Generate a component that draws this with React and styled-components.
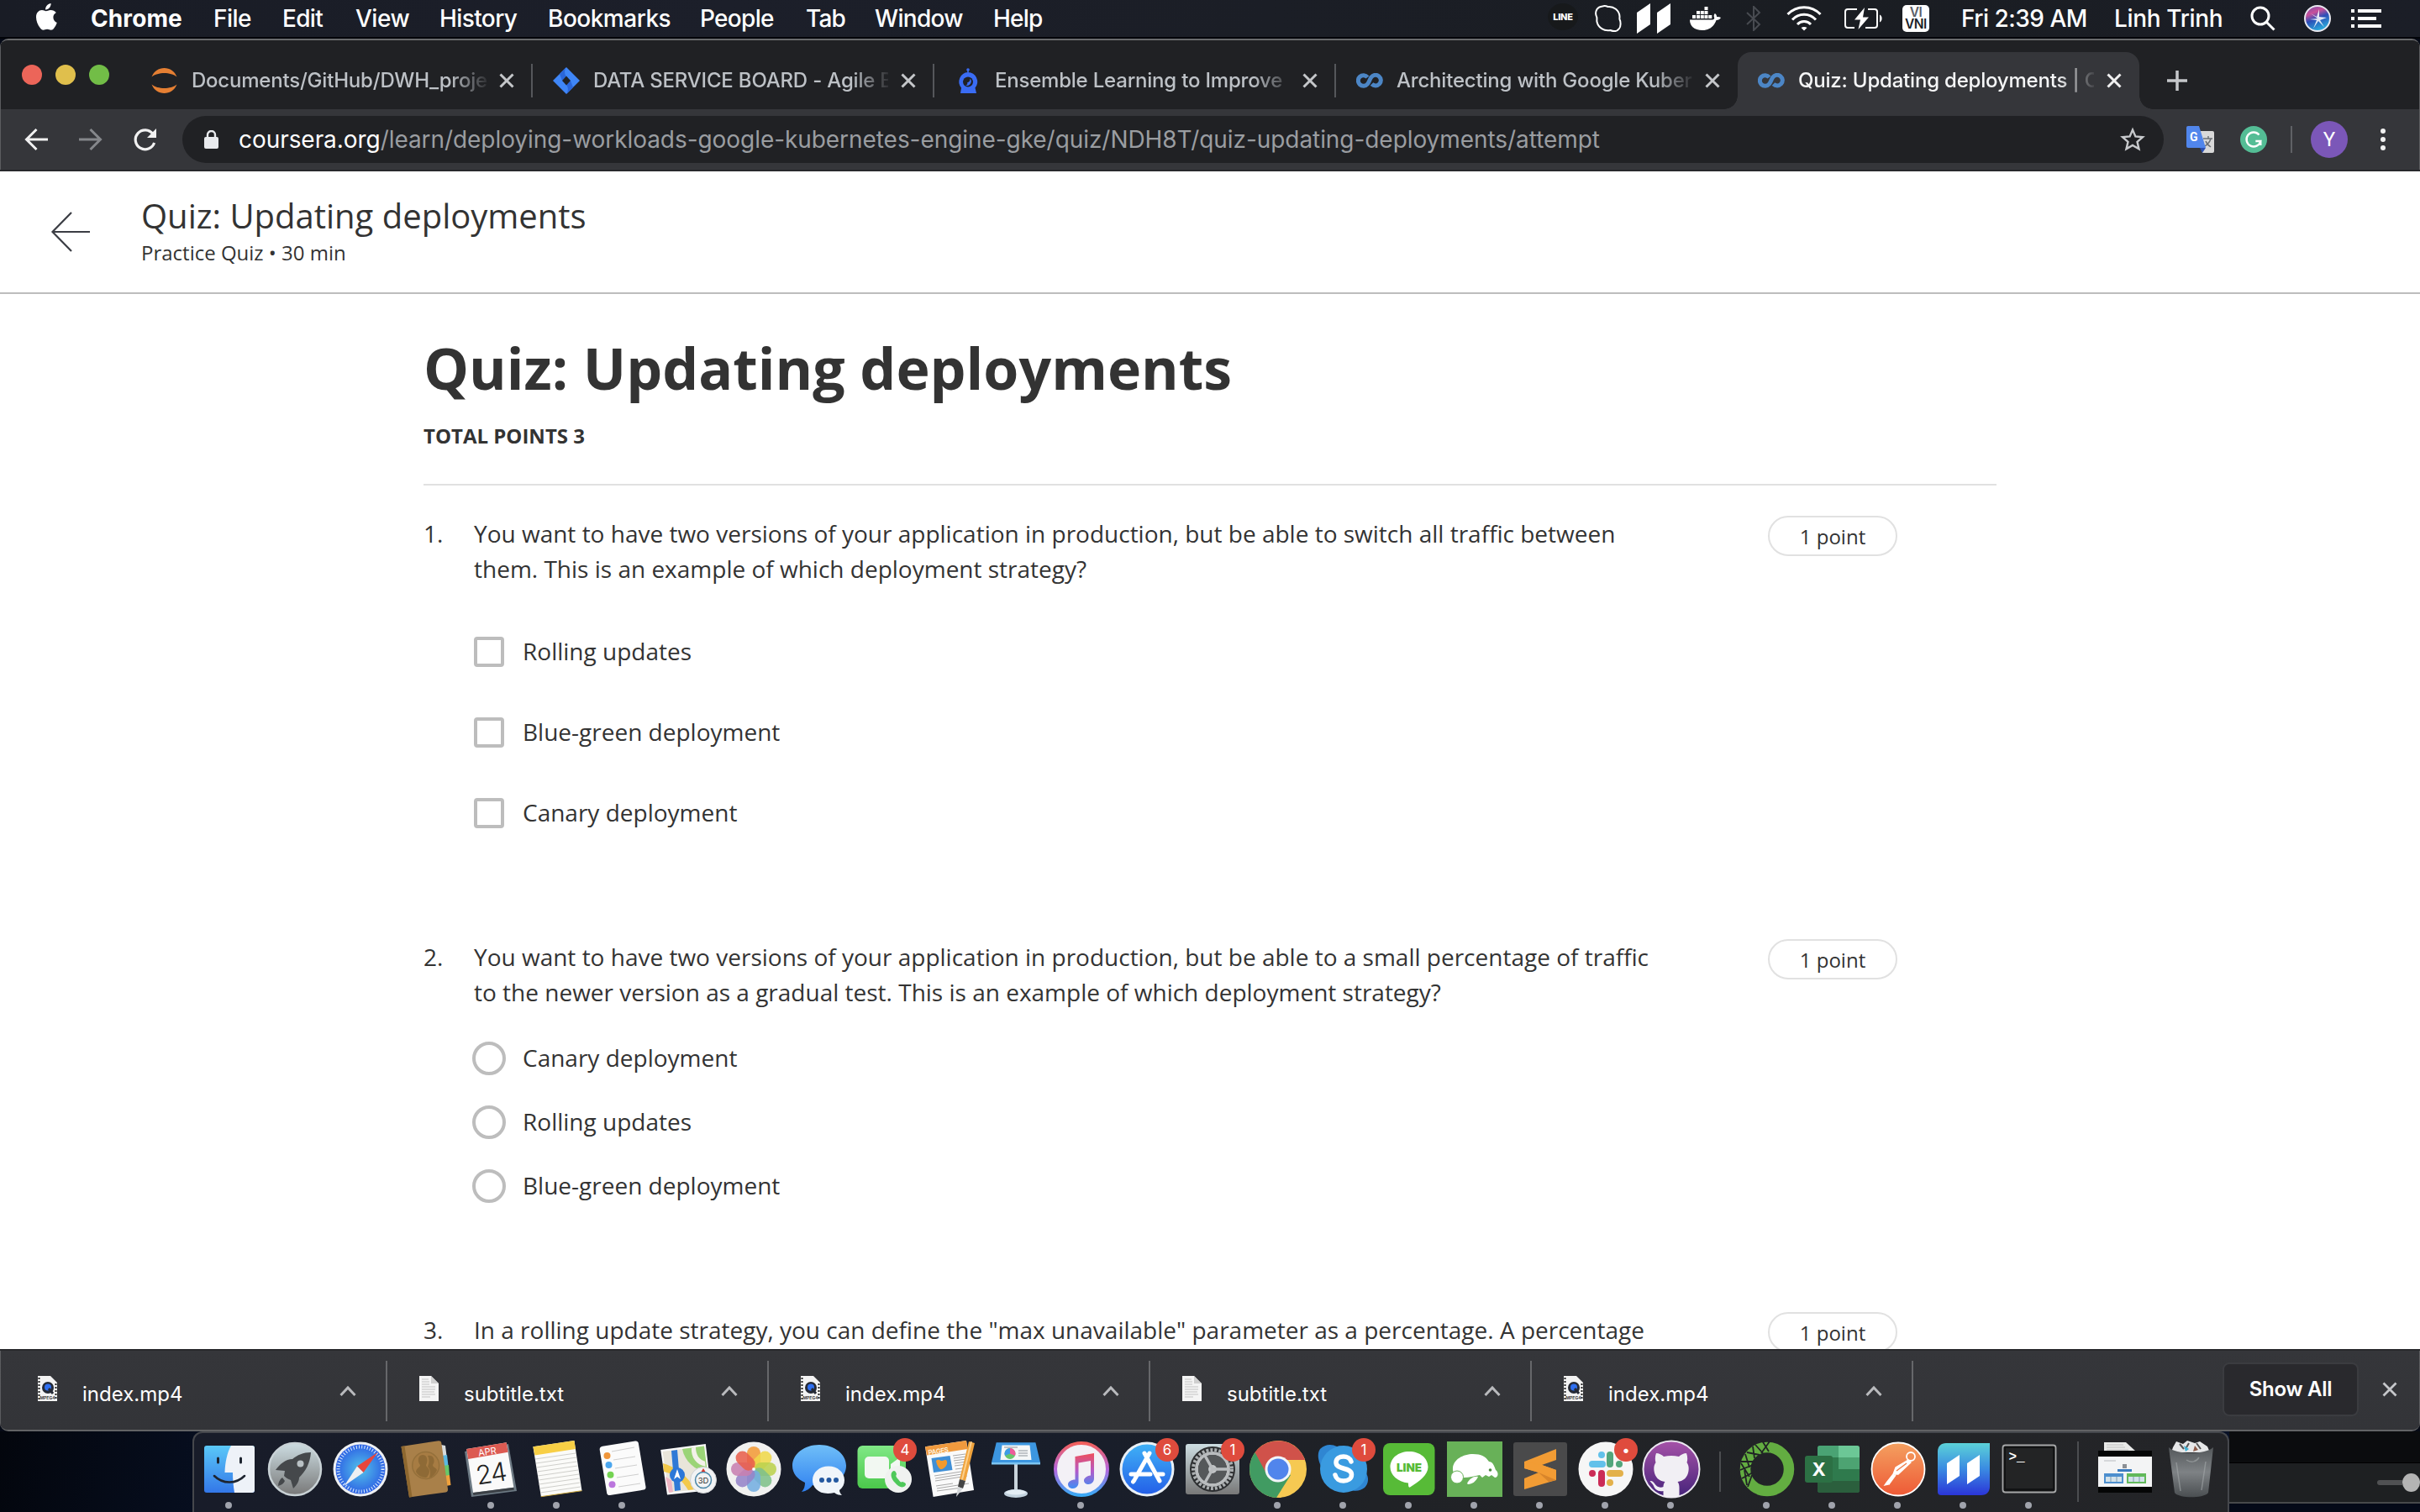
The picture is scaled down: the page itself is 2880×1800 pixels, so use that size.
import React from "react";
import styled, { createGlobalStyle, css } from "styled-components";

const ui = `Inter, "Liberation Sans", sans-serif`;
const body = `"Open Sans", "Noto Sans", sans-serif`;

const Global = createGlobalStyle`
  * { box-sizing: border-box; }
  html, body { margin: 0; padding: 0; background: #060a16; }
  svg { display: block; flex: none; }
`;

const Desktop = styled.div`
  width: 2880px;
  height: 1800px;
  overflow: hidden;
  display: flex;
  flex-direction: column;
  background: #060a16;
  font-family: ${ui};
`;

/* ---------- macOS menu bar ---------- */
const MenuBar = styled.header`
  height: 46px;
  flex: none;
  display: flex;
  justify-content: space-between;
  background: linear-gradient(90deg, #191c25, #1c1f2a 30%, #1a1d22 75%, #1b1e27);
  border-bottom: 2px solid #020409;
  color: #fff;
`;
const MenuLeft = styled.nav`
  display: flex;
  align-items: center;
  padding-left: 42px;
`;
const AppleSlot = styled.span`
  width: 66px;
  margin-top: -4px;
`;
const MenuItem = styled.span`
  width: ${(p) => p.$w}px;
  font-size: 28px;
  line-height: 44px;
  white-space: nowrap;
  letter-spacing: ${(p) => p.$ls ?? -0.5}px;
  font-weight: ${(p) => (p.$bold ? 700 : 500)};
`;
const MenuRight = styled.div`
  display: flex;
  align-items: center;
  width: 1040px;
`;
const Status = styled.span`
  width: ${(p) => p.$w}px;
  height: 44px;
  display: flex;
  align-items: center;
  flex: none;
`;
const LineBlob = styled.span`
  width: 36px;
  height: 32px;
  margin: -4px 0 0 2px;
  border-radius: 50%;
  background: #17191b;
  display: flex;
  align-items: center;
  justify-content: center;
  font-size: 11px;
  font-weight: 800;
  letter-spacing: -0.3px;
`;
const InputBadge = styled.span`
  width: 32px;
  height: 32px;
  border-radius: 5px;
  background: #fff;
  color: #1b1e27;
  font-size: 15.5px;
  font-weight: 600;
  line-height: 14.5px;
  text-align: center;
  display: flex;
  flex-direction: column;
  justify-content: center;
  letter-spacing: -0.5px;
`;
const InputTop = styled.span`
  color: #5c5f68;
`;

/* ---------- Chrome window ---------- */
const Window = styled.main`
  height: 1658px;
  flex: none;
  display: flex;
  flex-direction: column;
  border-radius: 10px;
  overflow: hidden;
  background: #202124;
  border-top: 2px solid #696a6c;
  border-bottom: 2px solid #626365;
`;
const edge = css`
  box-shadow: inset 1px 0 #5b5c5f, inset -1px 0 #5b5c5f;
`;
const TabStrip = styled.div`
  height: 82px;
  flex: none;
  display: flex;
  align-items: flex-end;
  background: #202124;
  ${edge}
`;
const Lights = styled.div`
  width: 156px;
  height: 82px;
  display: flex;
  gap: 16px;
  padding: 29px 0 0 26px;
`;
const Light = styled.span`
  width: 24px;
  height: 24px;
  border-radius: 50%;
  background: ${(p) => p.$c};
`;
const Tab = styled.div`
  width: 478px;
  height: 68px;
  display: flex;
  align-items: center;
  padding-left: 24px;
  position: relative;
  color: ${(p) => (p.$active ? "#f5f6f7" : "#bdc1c6")};
  ${(p) =>
    p.$active &&
    css`
      background: #35363a;
      border-radius: 16px 16px 0 0;
      &::before,
      &::after {
        content: "";
        position: absolute;
        bottom: 0;
        width: 16px;
        height: 16px;
      }
      &::before {
        left: -16px;
        background: radial-gradient(circle at 0 0, transparent 15.5px, #35363a 16px);
      }
      &::after {
        right: -16px;
        background: radial-gradient(circle at 100% 0, transparent 15.5px, #35363a 16px);
      }
    `}
`;
const Favicon = styled.span`
  width: 48px;
`;
const TabTitle = styled.span`
  width: 352px;
  font-size: 24px;
  line-height: 68px;
  letter-spacing: -0.2px;
  font-weight: 500;
  white-space: nowrap;
  overflow: hidden;
  mask-image: linear-gradient(90deg, #000 308px, transparent 356px);
`;
const CloseSlot = styled.span`
  width: 48px;
  display: flex;
  justify-content: center;
`;
const TabRule = styled.span`
  width: 2px;
  height: 40px;
  margin-left: 5px;
  background: #55575b;
`;
const PlusSlot = styled.span`
  height: 68px;
  padding-left: 33px;
  display: flex;
  align-items: center;
`;
const Toolbar = styled.div`
  height: 74px;
  flex: none;
  display: flex;
  align-items: center;
  background: #35363a;
  border-bottom: 2px solid #28292c;
  ${edge}
`;
const NavButtons = styled.div`
  width: 217px;
  padding-left: 28px;
  display: flex;
  gap: 35px;
`;
const Omnibox = styled.div`
  width: 2358px;
  height: 56px;
  border-radius: 28px;
  background: #202124;
  display: flex;
  align-items: center;
  padding: 0 22px 0 26px;
`;
const Url = styled.span`
  flex: 1;
  margin-left: 24px;
  font-size: 28px;
  line-height: 56px;
  letter-spacing: -0.06px;
  color: #9a9da1;
  white-space: nowrap;
`;
const Host = styled.span`
  color: #fff;
`;
const Extensions = styled.div`
  display: flex;
  align-items: center;
  padding-left: 27px;
`;
const ExtRule = styled.span`
  width: 2px;
  height: 32px;
  margin: 0 22px 0 28px;
  background: #5f6165;
`;
const Avatar = styled.span`
  width: 44px;
  height: 44px;
  border-radius: 50%;
  background: #7b57b8;
  color: #fff;
  font: 400 24px/44px Roboto, sans-serif;
  text-align: center;
  margin-right: 38px;
`;
const Grammarly = styled.span`
  margin-left: 31px;
`;

/* ---------- Page ---------- */
const Page = styled.section`
  height: 1402px;
  flex: none;
  overflow: hidden;
  background: #fff;
  color: #333;
  font-family: ${body};
`;
const PageHeader = styled.div`
  height: 146px;
  border-bottom: 2px solid #bdbdbd;
  display: flex;
`;
const BackSlot = styled.div`
  width: 168px;
  padding: 48px 0 0 60px;
`;
const HeaderText = styled.div`
  padding-top: 26px;
`;
const HeaderTitle = styled.div`
  font-size: 40px;
  line-height: 54px;
`;
const HeaderSub = styled.div`
  margin-top: -1px;
  font-size: 24px;
  line-height: 36px;
`;
const Content = styled.div`
  width: 1872px;
  margin-left: 504px;
  padding-top: 38px;
`;
const H1 = styled.h1`
  margin: 0;
  font-size: 68px;
  line-height: 100px;
  font-weight: 700;
  white-space: nowrap;
`;
const Total = styled.div`
  margin-top: 13px;
  padding-bottom: 39px;
  font-size: 24px;
  line-height: 36px;
  font-weight: 700;
  border-bottom: 2px solid #e1e1e1;
  margin-bottom: 36px;
`;
const Question = styled.article`
  display: flex;
  align-items: flex-start;
  height: ${(p) => p.$h}px;
  font-size: 28px;
  line-height: 42px;
`;
const Num = styled.span`
  width: 60px;
`;
const QBody = styled.div`
  width: 1540px;
`;
const Prompt = styled.p`
  margin: 0;
  height: 84px;
  white-space: nowrap;
`;
const Options = styled.div`
  margin-top: ${(p) => (p.$round ? 20 : 30)}px;
`;
const Option = styled.label`
  height: ${(p) => (p.$round ? 76 : 96)}px;
  display: flex;
  align-items: center;
`;
const OptionText = styled.span`
  padding-bottom: 2px;
`;
const BoxSlot = styled.span`
  width: 58px;
`;
const Box = styled.span`
  display: block;
  width: ${(p) => (p.$round ? 40 : 36)}px;
  height: ${(p) => (p.$round ? 40 : 36)}px;
  margin-left: ${(p) => (p.$round ? -2 : 0)}px;
  border: 4px solid #bdbdbd;
  border-radius: ${(p) => (p.$round ? "50%" : "4px")};
`;
const Points = styled.span`
  width: 154px;
  height: 48px;
  border: 2px solid #e1e1e1;
  border-radius: 24px;
  font-size: 24px;
  line-height: 45px;
  text-align: center;
`;

/* ---------- Download shelf ---------- */
const Shelf = styled.footer`
  flex: 1;
  display: flex;
  background: linear-gradient(#35363a, #333438);
  border-top: 2px solid #28292c;
  color: #fff;
  ${edge}
`;
const Download = styled.div`
  width: ${(p) => p.$w}px;
  padding-left: ${(p) => p.$pad}px;
  display: flex;
`;
const FileIcon = styled.span`
  width: 53px;
  padding-top: 30px;
`;
const FileName = styled.span`
  flex: 1;
  font-size: 24px;
  line-height: 36px;
  padding-top: 34px;
`;
const Chevron = styled.span`
  padding: 41px 35px 0 0;
`;
const ShelfRule = styled.span`
  width: 2px;
  height: 72px;
  margin-top: 12px;
  background: #66676a;
`;
const ShelfEnd = styled.div`
  margin-left: auto;
  display: flex;
  padding: 14px 27px 0 0;
  gap: 28px;
`;
const ShowAll = styled.button`
  width: 162px;
  height: 64px;
  border: 2px solid #3b3c40;
  border-radius: 8px;
  background: #29292d;
  color: #fff;
  font: 600 24px/58px ${ui};
  letter-spacing: -0.3px;
  padding: 0;
`;
const ShelfClose = styled.span`
  padding-top: 23px;
`;

/* ---------- Dock ---------- */
const DockArea = styled.div`
  height: 96px;
  flex: none;
  display: flex;
  background: linear-gradient(100deg, #03060d, #081126 12%);
`;
const Dock = styled.div`
  width: 2424px;
  margin-left: 229px;
  border: 2px solid #45474c;
  border-bottom: 0;
  border-radius: 12px 12px 0 0;
  background: linear-gradient(90deg, #181c29, #191e2a 45%, #202226 58%, #242528);
  display: flex;
  padding-left: 2px;
`;
const Cell = styled.div`
  width: 78px;
  height: 94px;
  position: relative;
`;
const RunDot = styled.i`
  position: absolute;
  left: 35px;
  top: 82px;
  width: 8px;
  height: 8px;
  border-radius: 50%;
  background: #a0a3ac;
`;
const Badge = styled.b`
  position: absolute;
  left: 50px;
  top: 6px;
  width: 28px;
  height: 28px;
  border-radius: 50%;
  background: #df4b3d;
  color: #fff;
  font: 400 17px/28px ${ui};
  text-align: center;
`;
const DockRule = styled.span`
  width: 2px;
  height: ${(p) => p.$h}px;
  margin: ${(p) => p.$m};
  background: #4b4d50;
`;
const Behind = styled.div`
  flex: 1;
  display: flex;
  flex-direction: column;
  background: #050a18;
`;
const BehindTop = styled.div`
  height: 38px;
  background: #0b0c0e;
  border-bottom: 1px solid #000;
`;
const BehindBar = styled.div`
  height: 48px;
  background: #1e2022;
  border-bottom: 2px solid #47494b;
  display: flex;
  justify-content: flex-end;
  align-items: center;
`;
const SliderTrack = styled.span`
  width: 30px;
  height: 6px;
  border-radius: 3px 0 0 3px;
  background: #505153;
`;
const SliderKnob = styled.span`
  width: 21px;
  height: 22px;
  border-radius: 50%;
  background: #b4b4b4;
`;

/* ---------- Glyphs ---------- */
const X = ({ s = 18, c = "#c5c7ca", w = 3 }) => (
  <svg width={s} height={s} viewBox="0 0 18 18" stroke={c} strokeWidth={w}>
    <path d="M1.500 1.500l15 15M16.500 1.500l-15 15" />
  </svg>
);
const Apple = () => (
  <svg width="27" height="32" viewBox="0 0 27 32" fill="#fff">
    <path d="M18.6 0c.2 2-.6 3.900-1.800 5.300-1.200 1.400-3 2.400-4.700 2.200-.2-1.900.7-3.800 1.800-5C15.100 1.100 17.100.1 18.600 0zM24.800 11c-2.300 1.400-3.500 3.300-3.400 5.700 0 2.900 1.700 5.100 4.400 6.200-.8 2.400-2 4.500-3.500 6.500-1 1.300-2.100 2.300-3.600 2.300-1.700 0-2.400-1-4.600-1s-3 1-4.600 1c-1.500 0-2.700-1.200-3.700-2.500C3 25.700 1 20.600 1 16.400c0-5.300 3.400-8.300 6.900-8.300 1.900 0 3.600 1.200 4.900 1.200 1.200 0 3.200-1.400 5.600-1.300 2.600.1 4.900 1 6.400 3z" />
  </svg>
);
const SkypeOutline = () => (
  <svg width="32" height="32" viewBox="0 0 32 32" fill="none" stroke="#fff" strokeWidth="2">
    <path d="M9 1.500c3-1 5-.2 6.500.5 7-.8 13.500 4.500 14 11.500 0 1.500-.2 2.500 0 3.500 1.500 3 1.500 8.500-.5 11-2.500 3.500-7 3.500-10.500 2C11 31.500 4 27 2.500 20c-.4-2 .2-4-.2-5.500C.5 11 .7 8 2.500 5 4 2.800 6 1.900 9 1.500z" />
  </svg>
);
const Bars = () => (
  <svg width="40" height="36" viewBox="0 0 40 36" fill="#fff">
    <path d="M0 11L16 0v25L0 36zM24 11L40 0v25L24 36z" />
  </svg>
);
const Docker = () => (
  <svg width="37" height="28" viewBox="0 0 37 28" fill="#fff">
    <path d="M17.500 0h4v4h-4zM8 5h4v4H8zM12.800 5h4v4h-4zM17.500 5h4v4h-4zM3 10h4v4H3zM8 10h4v4H8zM12.800 10h4v4h-4zM17.500 10h4v4h-4zM22.300 10h4v4h-4zM0 15.500h26c2 0 3-.6 3.300-2-1-2-.8-4 .5-5.500 1.600 1 2.300 2.400 2.300 4 1.700-.3 3.400 0 4.900 1-1 2-3 3-5.500 3C29 23.500 23 28 15 28 5 28 0 23 0 15.500z" />
  </svg>
);
const Bluetooth = () => (
  <svg width="18" height="30" viewBox="0 0 18 30" fill="none" stroke="#484b51" strokeWidth="2">
    <path d="M1 8l15 14-7 7V1l7 7L1 22" />
  </svg>
);
const Wifi = () => (
  <svg width="42" height="30" viewBox="0 0 42 30" fill="none" stroke="#fff" strokeWidth="3">
    <path d="M1.500 10a27 27 0 0 1 39 0M7 16.500a19 19 0 0 1 28 0M13 22a11 11 0 0 1 16 0" />
    <path d="M21 29.500l-3.500-3.500c2-1.500 5-1.500 7 0z" fill="#fff" stroke="none" />
  </svg>
);
const Battery = () => (
  <svg width="47" height="26" viewBox="0 0 47 26">
    <path d="M16 2H5a3 3 0 0 0-3 3v16a3 3 0 0 0 3 3h8M29 2h8a3 3 0 0 1 3 3v16a3 3 0 0 1-3 3H26" fill="none" stroke="#fff" strokeWidth="2" />
    <path d="M43 8.500c3.500 1 3.500 8 0 9zM25 0L13 14.500h7L17.500 26 30 11.500h-7z" fill="#fff" />
  </svg>
);
const Search = () => (
  <svg width="30" height="30" viewBox="0 0 30 30" fill="none" stroke="#fff" strokeWidth="3">
    <circle cx="12" cy="12" r="10" />
    <path d="M19 19l9.500 9.500" />
  </svg>
);
const Siri = () => (
  <svg width="32" height="32" viewBox="0 0 32 32">
    <defs>
      <linearGradient id="siri" x1="0" y1="0" x2=".4" y2="1">
        <stop offset="0" stopColor="#6a4bb0" />
        <stop offset=".35" stopColor="#c9509a" />
        <stop offset=".6" stopColor="#2c4fb8" />
        <stop offset="1" stopColor="#2ba5d9" />
      </linearGradient>
    </defs>
    <circle cx="16" cy="16" r="15" fill="url(#siri)" stroke="#e8e8f0" strokeWidth="2" />
    <path d="M16 16L8 10l7 4 3-9 0 9 9 1-8 3 5 8-7-7-6 9 4-10-8-1z" fill="#fff" opacity=".85" />
  </svg>
);
const ListIcon = () => (
  <svg width="36" height="22" viewBox="0 0 36 22" fill="#fff">
    <path d="M0 0h4v4H0zM8 0h28v4H8zM0 9h4v4H0zM8 9h22v4H8zM0 18h4v4H0zM8 18h28v4H8z" />
  </svg>
);

const Jupyter = () => (
  <svg width="31" height="30" viewBox="0 0 31 30" fill="#e57f33">
    <path d="M0.500 10.500C3 4 9 0 15.500 0S28 4 30.500 10.500C27 7.500 21 6 15.500 6S4 7.500.5 10.500zM.5 19.500C3 26 9 30 15.500 30S28 26 30.500 19.500C27 22.500 21 24 15.500 24S4 22.500.5 19.500z" />
  </svg>
);
const Jira = () => (
  <svg width="32" height="32" viewBox="0 0 32 32">
    <path d="M16 0l16 16-16 16L0 16z" fill="#3f86f7" />
    <path d="M16 0c-3 4-2 9 0 11l-5 5-3-8z" fill="#2a66d9" />
    <path d="M16 32c3-4 2-9 0-11l5-5 3 8z" fill="#2a66d9" />
    <path d="M16 10.500l5 5.500-5 5.500-5-5.500z" fill="#202124" />
  </svg>
);
const Robot = () => (
  <svg width="32" height="30" viewBox="0 0 32 30" fill="#3a6cf4">
    <circle cx="16" cy="2" r="1.800" />
    <path d="M15.200 2h1.600v5h-1.600zM16 5a11.300 11.300 0 0 1 8.500 18.500L26 30H7l1-6.500A11.300 11.300 0 0 1 16 5z" />
    <circle cx="16" cy="16.500" r="6" fill="#202124" />
    <path d="M18.500 12.500a5 5 0 0 1-5.500 8c2.500-.5 2.500-2 2.200-3.500 1.800.2 3.400-1.500 3.300-4.500z" />
  </svg>
);
const Coursera = () => (
  <svg width="32" height="18" viewBox="0 0 32 18" fill="none" stroke="#4c86c6" strokeWidth="5">
    <path d="M13.500 5A6.300 6.300 0 1 0 13.500 13C16 10 15.500 8 18 4.800A6.300 6.300 0 1 1 18.500 13" />
  </svg>
);
const Arrow = ({ c, flip }) => (
  <svg width="30" height="28" viewBox="0 0 30 28" fill="none" stroke={c} strokeWidth="3" transform={flip ? "scale(-1 1)" : undefined}>
    <path d="M29 14H4M15.500 2L3.500 14l12 12" />
  </svg>
);
const Reload = () => (
  <svg width="30" height="28" viewBox="0 0 30 28">
    <path d="M24 7.500A11.500 11.500 0 1 0 25.600 18" fill="none" stroke="#f1f1f1" strokeWidth="3.200" />
    <path d="M28 1v11H17z" fill="#f1f1f1" />
  </svg>
);
const Lock = () => (
  <svg width="17" height="22" viewBox="0 0 17 22">
    <rect y="8" width="17" height="14" rx="2" fill="#e8eaed" />
    <path d="M4 9V5.500a4.500 4.500 0 0 1 9 0V9" fill="none" stroke="#e8eaed" strokeWidth="2.400" />
  </svg>
);
const Star = () => (
  <svg width="30" height="30" viewBox="0 0 24 24" fill="none" stroke="#c7c9cc" strokeWidth="1.900">
    <path d="M12 2.800l2.700 6.400 6.900.6-5.200 4.500 1.600 6.800-6-3.600-6 3.600 1.600-6.800-5.200-4.500 6.900-.6z" />
  </svg>
);
const Translate = () => (
  <svg width="33" height="32" viewBox="0 0 33 32">
    <path d="M15 6h16a2 2 0 0 1 2 2v22a2 2 0 0 1-2 2H19z" fill="#d9d9d9" />
    <path d="M20 15h11M26 12v3M29 15c-1 4-4 7-7 9M23 18c1 3 3 5 6 7" stroke="#6b7076" strokeWidth="1.500" fill="none" />
    <path d="M2 0h13l8 26H2a2 2 0 0 1-2-2V2a2 2 0 0 1 2-2z" fill="#5186ec" />
    <path d="M16 26h7l-4 6z" fill="#2b4fb0" />
    <text x="4" y="18" fontFamily="Roboto" fontWeight="700" fontSize="14" fill="#fff">G</text>
  </svg>
);
const GrammarlyIcon = () => (
  <svg width="32" height="32" viewBox="0 0 32 32">
    <circle cx="16" cy="16" r="16" fill="#54bd95" />
    <path d="M22.500 10.500a8.500 8.500 0 1 0 1.800 7.500h-6M24.300 18v5" fill="none" stroke="#fff" strokeWidth="2.400" />
  </svg>
);
const BackArrow = () => (
  <svg width="48" height="48" viewBox="0 0 48 48" fill="none" stroke="#3b3d44" strokeWidth="2.200">
    <path d="M47 24H2.500M25 1L2.500 24 25 47" />
  </svg>
);
const MovieFile = () => (
  <svg width="23" height="30" viewBox="0 0 23 30">
    <path d="M0 0h15l8 8v22H0z" fill="#f3f3f3" />
    <path d="M1.500 2v27M21.500 9v20" stroke="#222" strokeWidth="2" strokeDasharray="2 2" />
    <circle cx="12" cy="14" r="7" fill="#252a36" />
    <circle cx="12" cy="13.500" r="4" fill="#2f6ff0" />
    <path d="M13 15l5 6" stroke="#252a36" strokeWidth="3" />
    <text x="11.500" y="28" textAnchor="middle" fontFamily="Inter" fontSize="5" fontWeight="700" fill="#444">MPEG4</text>
  </svg>
);
const TextFile = () => (
  <svg width="23" height="30" viewBox="0 0 23 30">
    <path d="M0 0h14l9 9v21H0z" fill="#f4f4f4" />
    <path d="M14 0v9h9z" fill="#cfcfcf" />
    <path d="M3 4h8M3 7h9M3 10h9M3 13h16M3 16h16M3 19h15M3 22h16M3 25h10" stroke="#c3c3c3" strokeWidth="1" />
  </svg>
);
const Up = () => (
  <svg width="20" height="14" viewBox="0 0 20 14" fill="none" stroke="#b9babd" strokeWidth="3">
    <path d="M1.500 12L10 3l8.500 9" />
  </svg>
);

/* ---------- Dock drawings: every icon shares a 78x82 cell ---------- */
const petals = ["#f29b38", "#efd84b", "#bcd14d", "#7fc08a", "#74aee0", "#9584c8", "#c77fb0", "#e8604c"];
const art = {
  finder: (
    <>
      <rect x="10" y="15" width="60" height="56" rx="3" fill="url(#gFinder)" />
      <path d="M42 15c-5 9-7 20-7.500 32H44c0 8 .7 16 2 24h21a3 3 0 0 0 3-3V18a3 3 0 0 0-3-3z" fill="#eef2f8" />
      <path d="M26.500 30v5M53.500 30v5" stroke="#1d2430" strokeWidth="3" strokeLinecap="round" />
      <path d="M22 51c10 10 26 10 36 0" fill="none" stroke="#1d2430" strokeWidth="2.500" strokeLinecap="round" />
    </>
  ),
  launchpad: (
    <>
      <circle cx="40" cy="43" r="31" fill="url(#gSilver)" stroke="#c9d2d6" strokeWidth="2.500" />
      <path d="M59 23c-9 0-16 3-22 8-8 0-15 6-20 13l11 1-1 6c2 2 5 4 8 5l3 10c5-5 7-9 7-13 8-8 13-17 14-30z" fill="#45484b" />
      <circle cx="46.500" cy="36.500" r="4" fill="#b9c1c4" />
      <path d="M25 53c-3 2-5 6-5 10 4-1 7-3 8-6" fill="#45484b" />
    </>
  ),
  safari: (
    <>
      <circle cx="40" cy="43" r="32.500" fill="#eef0f2" />
      <circle cx="40" cy="43" r="29.500" fill="url(#gSafari)" />
      <circle cx="40" cy="43" r="26.500" fill="none" stroke="#dff0ff" strokeWidth="4" strokeDasharray="1 2.300" />
      <path d="M60.500 23L43.500 47 36 39.500z" fill="#e8463c" />
      <path d="M20.500 63L36 39.500l7.500 7.500z" fill="#eef0f2" />
    </>
  ),
  contacts: (
    <>
      <path d="M58 14l5 1 1.500 12-5 1z" fill="#d7dbdd" />
      <path d="M59 27l6-1 1.500 13-6 1z" fill="#5bb8e2" />
      <path d="M60 39l7-1 1 13-6 1z" fill="#67c86a" />
      <path d="M62 51l6-1 1.500 12-6 1z" fill="#f0a23c" />
      <path d="M10.500 16L55 9.200c2 0 3 .8 3.300 2.500L66 67c0 2-.5 3-2.500 3.500L20 76.500z" fill="#a98049" />
      <path d="M10.500 16l4-.6 9 60.600-3.500.5z" fill="#8d672f" />
      <circle cx="39.700" cy="38.500" r="16" fill="#a77c43" stroke="#94703b" strokeWidth="1.500" />
      <path d="M28 46c1-5 5-5 5-8-4-5-2-12 3-12s7 6 4 12c0 3 4 3 4 8 0 2-2 6-4 7-6 0-10-3-12-7zM42 27c6-2 10 5 6 11 0 3 4 3 5 6-2 5-5 8-9 9 2-6 1-10-2-13 2-5 2-9 0-13z" fill="#8e6a36" />
    </>
  ),
  calendar: (
    <>
      <path d="M8 22l52-9 10 56-54 7z" fill="#6d7a84" />
      <path d="M10.300 19l47.400-7.700 8.700 53.400L18 71z" fill="#fafafa" />
      <path d="M10.300 19l47.400-7.700 1.900 11.500L12.200 31z" fill="#dc5a52" />
      <path d="M18 71l48.400-6.300.4 3L18.400 74z" fill="#3b4046" />
      <text transform="translate(35.500 26) rotate(-9)" textAnchor="middle" fontFamily="Inter" fontSize="11" fill="#fff">APR</text>
      <text transform="translate(41 59) rotate(-9)" textAnchor="middle" fontFamily="Inter" fontWeight="300" fontSize="31" fill="#222" letterSpacing="-1">24</text>
    </>
  ),
  notes: (
    <>
      <path d="M11.400 16.300L60.400 9l9.100 59.700-48.600 7z" fill="#fbfbf9" />
      <path d="M11.400 16.300L60.400 9l1.500 10-48.500 7.500z" fill="#f8cf45" />
      <path d="M14 31l48-7M15 36l48-7M15.500 41l48-7M16.500 46l48-7M17 51l48-7M18 56l48-7M18.500 61l48-7M19.500 66l48-7M20 71l48-7" stroke="#cfcfcb" strokeWidth="1" />
      <path d="M20.900 75.700l48.600-7" stroke="#c9a53a" strokeWidth="1" />
    </>
  ),
  reminders: (
    <>
      <path d="M16 15.800L55 9.500c2-.3 3.500.7 3.800 2.500L67.500 64c.3 2-.8 3.300-2.500 3.600L25 74c-2 .3-3.500-.7-3.800-2.500L12.700 20c-.3-2 1-3.800 3.300-4.200z" fill="#fbfbfb" />
      <path d="M27 22l27-5M29 32l26-4M31 42l26-4M33 53l26-4M35 64l26-4" stroke="#cfcfcf" strokeWidth="1" />
      <circle cx="21.500" cy="27" r="4" fill="#f0963a" />
      <circle cx="23.500" cy="38" r="4" fill="#4ba6ee" />
      <circle cx="25.500" cy="49.700" r="4" fill="#74d352" />
      <circle cx="27.500" cy="61.300" r="4" fill="#bb76dd" />
    </>
  ),
  maps: (
    <>
      <path d="M7.200 20l53.600-7 6.500 55L15 73.500z" fill="#fafafa" />
      <path d="M9.500 22l49-6.500 6 50L17 71z" fill="#e9e5da" />
      <path d="M33 19l26-3.500 4 32C48 44 36 34 33 19z" fill="#9bd477" />
      <path d="M44 17.500l5-.7c0 9 4 15 11 17l.7 6C50 38 43 29 44 17.500z" fill="#f3f1ea" />
      <path d="M10 36c14 4 29 14 38 31l-8 1C33 56 24 49 11 46z" fill="#f3c94a" />
      <path d="M13 52l7 4 2 14-5 1z" fill="#efb6c4" />
      <path d="M20 21l7-1 4 48-7 1z" fill="#2f7ad6" />
      <circle cx="27" cy="50" r="9" fill="#2b77d8" />
      <path d="M27 43l4 12-4-3-4 3z" fill="#fff" />
      <circle cx="58" cy="56" r="15.500" fill="#f2f3f4" stroke="#cfd2d4" />
      <circle cx="58" cy="56" r="9.500" fill="none" stroke="#4b87a8" strokeWidth="1.500" />
      <path d="M58 42l2.500 4h-5z" fill="#d8392f" />
      <text x="58" y="59.500" textAnchor="middle" fontFamily="Inter" fontSize="9.500" fill="#333">3D</text>
    </>
  ),
  photos: (
    <>
      <circle cx="40" cy="43" r="32.500" fill="#f1f1f0" />
      {petals.map((c, i) => (
        <rect key={c} x="32" y="16" width="16" height="26" rx="8" fill={c} opacity=".88" transform={`rotate(${i * 45} 40 43)`} />
      ))}
      <circle cx="40" cy="43" r="2" fill="#fff" opacity=".8" />
    </>
  ),
  messages: (
    <>
      <path d="M40 14c18 0 32 11 32 25S58 63 40 63c-3 0-5 0-8-1-3 4-7 7-13 8 3-3 4-7 4-11C14 55 8 48 8 39c0-14 14-25 32-25z" fill="url(#gMsg)" />
      <path d="M51 39.500c11 0 19 7.500 19 16.500 0 5-2 9-6 12 0 2 1 4 3 6-4 0-7-1-9-3-17 4-26-5-26-15 0-9 8-16.500 19-16.500z" fill="#f0f5fa" />
      <circle cx="43" cy="56" r="3" fill="#2458a0" />
      <circle cx="51.500" cy="56" r="3" fill="#2458a0" />
      <circle cx="60" cy="56" r="3" fill="#2458a0" />
    </>
  ),
  facetime: (
    <>
      <rect x="7.500" y="15" width="57.500" height="51" rx="6" fill="url(#gGreen)" />
      <rect x="16" y="28" width="29" height="26" rx="5" fill="#f2f8f2" />
      <path d="M47 37l11-8v25l-11-8z" fill="#f2f8f2" />
      <circle cx="56" cy="55" r="16" fill="#f0f2f0" />
      <path d="M49 46c2-2 4-1 5 3-1 2-1 3 2 6 2 3 3 4 5 3 4 1 5 3 3 5-3 3-8 1-12-4-4-4-6-10-3-13z" fill="#4fc95a" />
    </>
  ),
  pages: (
    <>
      <path d="M10 16.300L59 9l9 59-48.400 8z" fill="#fafafa" />
      <path d="M10 16.300L59 9l1.500 10L12 26.500z" fill="#f09a3e" />
      <text transform="translate(14 26) rotate(-8)" fontFamily="Inter" fontSize="8" fontWeight="600" fill="#fff3df" letterSpacing="-.4">PAGES</text>
      <path d="M17.500 30l22-3 3 17-22.500 3z" fill="#3f8fd6" />
      <path d="M23 33c3-3 5 0 7 0s5-3 6 1-3 8-6 9-6-4-7-10z" fill="#f39a2d" />
      <path d="M43 27l15-2M44 30l15-2M44 33l15-2M45 36l15-2M45 39l15-2M46 43l15-2M21 51l38-6M22 54l38-6M22 57l38-6M23 63l20-3M24 66l38-6M24 69l30-4" stroke="#a9a9a9" strokeWidth="1" />
      <path d="M62 10l7 2-11 45-7-2z" fill="#f0a33c" />
      <path d="M64 10l2 .5-11 45-2-.5z" fill="#fbd08c" />
      <path d="M51 55l7 2-3 9-6-2z" fill="#444" />
      <path d="M49 64l6 2-8 10z" fill="#d5d8da" />
    </>
  ),
  keynote: (
    <>
      <rect x="38" y="36" width="4" height="36" fill="#c8d3db" />
      <ellipse cx="40" cy="72" rx="14" ry="5" fill="#c3d3df" />
      <ellipse cx="40" cy="70.500" rx="12" ry="3" fill="#e3edf4" />
      <path d="M16.700 11.300h46.700L69 35H11z" fill="#3c96e0" />
      <path d="M11 35h58v2.500H11z" fill="#7cc5f2" />
      <path d="M23.500 14.500h33l2 17.500h-37z" fill="#f5f7f8" />
      <circle cx="33" cy="24.500" r="6.500" fill="#67c56b" />
      <path d="M33 24.500V18a6.500 6.500 0 0 1 6 9z" fill="#ef5a9a" />
      <path d="M33 24.500l-6 2.500a6.500 6.500 0 0 1 6-9z" fill="#3d9be8" />
      <path d="M43 21h11M43 24h11M43 27h11M26 17h16" stroke="#8d9499" strokeWidth="1.200" />
    </>
  ),
  itunes: (
    <>
      <circle cx="40" cy="43" r="31" fill="#f3f1f6" stroke="url(#gTunes)" strokeWidth="4" />
      <path d="M32.500 28L55 24v30c0 4-3 7-6.500 7S43 59 43 56.500s3-5.500 8-6V33l-14.500 2.500V59c0 4-3 7-6.500 7s-6-2-6-5 3.500-5.500 8.500-5.500z" fill="url(#gNote)" />
    </>
  ),
  appstore: (
    <>
      <circle cx="40" cy="43" r="32.500" fill="#eaf0f5" />
      <circle cx="40" cy="43" r="29.500" fill="url(#gStore)" />
      <path d="M43 24L26 54M37 24l18 33M21 49h23M52 49h7M25 56l-1.500 2" stroke="#fff" strokeWidth="5" strokeLinecap="round" />
    </>
  ),
  settings: (
    <>
      <rect x="8" y="13" width="64" height="60" rx="3" fill="url(#gSilver)" />
      <circle cx="40" cy="43" r="27" fill="#2d2f31" />
      <circle cx="40" cy="43" r="23" fill="none" stroke="#aaaeb0" strokeWidth="4" strokeDasharray="3 2" />
      <circle cx="40" cy="43" r="19" fill="none" stroke="#b9bcbe" strokeWidth="4" />
      <circle cx="40" cy="43" r="17" fill="#55585a" />
      <circle cx="40" cy="43" r="5" fill="#c2c5c7" />
      <path d="M40 43h18M40 43l-9-16M40 43l-9 16" stroke="#b9bcbe" strokeWidth="3.500" />
    </>
  ),
  chrome: (
    <>
      <circle cx="40" cy="43" r="34" fill="#f6c952" />
      <path d="M40 43L12.500 23A34 34 0 0 0 38 77l17-27z" fill="#419b62" />
      <path d="M12.500 23A34 34 0 0 1 72 32H40L27 50z" fill="#d0524a" />
      <circle cx="40" cy="43" r="15.500" fill="#f3f5f8" />
      <circle cx="40" cy="43" r="12.500" fill="#5185ec" />
    </>
  ),
  skype: (
    <>
      <path d="M12 19c6-6 14-6 20-3 18-3 37 11 35 32 3 5 3 12-2 17-5 4-12 5-18 2C26 69 12 56 13 39c-3-6-5-14-1-20z" fill="#2f86d2" />
      <circle cx="40" cy="43" r="28" fill="#3a9be0" />
      <path d="M49 34c-1-4-5-6-9-6-5 0-9 2.500-9 7 0 9.500 18.500 5 18.500 14.500 0 5-4.500 7.500-9.500 7.500s-9-2.500-10-7" fill="none" stroke="#fff" strokeWidth="5.500" strokeLinecap="round" />
    </>
  ),
  line: (
    <>
      <rect x="9" y="12" width="61.500" height="62" rx="8" fill="#57bb37" />
      <path d="M40 22c13 0 22.500 8 22.500 18.500 0 9-10 17-21.500 24-2 1-2-3-2-5C26 58 17.500 50 17.500 40.500 17.500 30 27 22 40 22z" fill="#fff" />
      <text x="40" y="46" textAnchor="middle" fontFamily="Inter" fontWeight="900" fontSize="13.500" fill="#57bb37">LINE</text>
    </>
  ),
  turtle: (
    <>
      <rect x="7" y="10" width="66" height="66" fill="#68b158" />
      <path d="M14 44c-1-12 12-19 24-19 10 0 15 3 19 9 4 0 6 4 8 10 4 3 3 9-1 9l-4-3-3 2-4-2-4 3-3-3c-12 3-25 5-31-1z" fill="#fff" />
      <ellipse cx="19" cy="52.500" rx="7.500" ry="7.500" fill="#fff" stroke="#68b158" />
      <path d="M31 60c3-6 8-9 13-8-2 5-7 9-12 9z" fill="#fff" />
      <circle cx="58.500" cy="44" r="1.800" fill="#4b8a3e" />
    </>
  ),
  sublime: (
    <>
      <rect x="8" y="11" width="64" height="64" rx="3" fill="#4a4a4b" />
      <path d="M21 34l38-15v13L42 38l17 6v12L21 67V54l17-7-17-5z" fill="#f29c34" />
      <path d="M21 42v-8l21 4 17 6v9z" fill="#f29c34" />
      <path d="M38 47l21 9-9 2z" fill="#d8852b" />
    </>
  ),
  slack: (
    <>
      <circle cx="40" cy="43" r="32.500" fill="#f6f6f6" />
      <g strokeWidth="8" strokeLinecap="round">
        <path d="M35 26h.01M24 37h12" stroke="#62c1ea" />
        <path d="M45 26v11M56 37h.01" stroke="#52a67c" />
        <path d="M45 48h12M45 59h.01" stroke="#e3b14a" />
        <path d="M35 48v12M24 48h.01" stroke="#cb2c57" />
      </g>
    </>
  ),
  github: (
    <>
      <circle cx="40" cy="43" r="33.500" fill="url(#gHub)" stroke="#ece8f1" strokeWidth="2" />
      <path d="M22 24c3 0 7 2 9 4 6-1.500 12-1.500 18 0 2-2 6-4 9-4 1.500 4 1.500 8 .5 11 2 3 2.500 6 2 10-1 8-6 12-13 13 1.500 2 2 4 2 7v10c-6 2-13 2-19 0v-6c-7 1-10-2-12-7-1-2-3-3-4-5 5-1 6 6 10 7 2 1 4 1 6 0 0-2 .5-4 2-6-7-1-12-5-13-13-.5-4 0-7 2-10-1-3-1-7 .5-11z" fill="#f1eff4" />
    </>
  ),
  conda: (
    <>
      <circle cx="40" cy="43" r="26" fill="none" stroke="#63ad41" strokeWidth="12.500" />
      <path d="M43 10L33 24M34 9l8 13M26 14l9 10M16 23l15 3M23 16l2 14M9 34l17 0M14 25l5 16M8 44l15-6M9 36l10 16M10 54l13-7M13 44l3 18M17 64l5-14" stroke="#202225" strokeWidth="1.800" />
    </>
  ),
  excel: (
    <>
      <rect x="22" y="15" width="50" height="56" rx="3" fill="#2f7a4d" />
      <path d="M47 15h22a3 3 0 0 1 3 3v11H47z" fill="#6cc796" />
      <path d="M22 29V18a3 3 0 0 1 3-3h22v14z" fill="#4aa374" />
      <path d="M47 29h25v14H47z" fill="#4da372" />
      <path d="M22 57h50v11a3 3 0 0 1-3 3H25a3 3 0 0 1-3-3z" fill="#2b5f3d" />
      <rect x="7" y="27" width="33" height="32" rx="3" fill="#2c7044" />
      <text x="23.500" y="51" textAnchor="middle" fontFamily="Inter" fontWeight="700" fontSize="22" fill="#fff">X</text>
    </>
  ),
  postman: (
    <>
      <circle cx="40" cy="43" r="31.500" fill="url(#gPost)" stroke="#fff" strokeWidth="1.800" />
      <circle cx="55" cy="28" r="5" fill="none" stroke="#fff" strokeWidth="1.800" />
      <path d="M52 32L37 41l-3 8 6 0 15-14zM34 49l-8 10 3 2 8-11M26 59l-2 3 4-1" fill="#fff" stroke="#fff" strokeWidth="1.300" />
      <path d="M50 36l-12 9" stroke="#ef7a45" strokeWidth="1.300" />
    </>
  ),
  bars: (
    <>
      <path d="M19 12h52v52c0 6-4 10-10 10H13c-3 0-4-2-4-4V22c0-6 4-10 10-10z" fill="url(#gBars)" />
      <path d="M20 36l15-10v25L20 61zM44 36l15-10v25L44 61z" fill="#fff" />
    </>
  ),
  terminal: (
    <>
      <rect x="8.500" y="14.500" width="63" height="56" rx="3" fill="#111213" stroke="#a7a8a9" strokeWidth="1.800" />
      <rect x="12" y="18" width="56" height="48" fill="#232425" />
      <text x="15.500" y="33" fontFamily="Liberation Mono" fontWeight="700" fontSize="16" fill="#fff">&gt;_</text>
    </>
  ),
  doc: (
    <>
      <path d="M14 11h26l13 12v6H14z" fill="#e9eae9" />
      <path d="M17 14h20M17 17h22M17 20h26" stroke="#c2c2c2" />
      <rect x="7" y="21" width="64" height="50" fill="#050606" />
      <rect x="7" y="28" width="64" height="36" fill="#f3f4f5" />
      <path d="M14 33h14" stroke="#b9bcc0" />
      <rect x="36" y="37" width="5" height="5" fill="#8b8f94" />
      <rect x="30" y="43" width="17" height="3" fill="#3c7cc0" />
      <rect x="14" y="48" width="23" height="12" fill="#4d8fce" />
      <rect x="41" y="48" width="23" height="12" fill="#62b95b" />
      <path d="M16 52h19v6H16zM43 52h19v6H43z" fill="#d3e2ea" />
      <path d="M22 52v6M29 52v6M49 52v6M56 52v6" stroke="#7d9bb0" />
    </>
  ),
  trash: (
    <>
      <path d="M18 17l4-7 8 3 5-4 9 3 6-2 9 6 3 7H16z" fill="#e6e7e8" />
      <path d="M26 13l5 6M37 12l-4 7M46 12l5 7" stroke="#555" strokeWidth="2" />
      <path d="M31 15l6 4-4 3z" fill="#3eb1d4" />
      <path d="M44 15l4 5-6 2z" fill="#8c5a48" />
      <path d="M13 17c8 9 44 9 53 0l-6 54c-4 7-36 7-40 0z" fill="url(#gTrash)" />
      <path d="M34 32c6 4 12 2 15-3M22 35l5 34M57 34l-5 34" stroke="#a4a8aa" strokeWidth="1.500" fill="none" opacity=".6" />
    </>
  ),
};

const Grad = ({ id, stops, r }) => {
  const s = stops.map((c, i) => <stop key={i} offset={i / (stops.length - 1)} stopColor={c} />);
  return r ? <radialGradient id={id}>{s}</radialGradient> : <linearGradient id={id} x1="0" y1="0" x2="0" y2="1">{s}</linearGradient>;
};
const Gradients = () => (
  <svg width="0" height="0">
    <defs>
      <Grad id="gFinder" stops={["#5ac8f8", "#3377e8"]} />
      <Grad id="gSilver" stops={["#cddde2", "#787878"]} />
      <Grad id="gSafari" stops={["#52c3ea", "#2e62e4"]} r />
      <Grad id="gMsg" stops={["#70bff8", "#2f80f0"]} />
      <Grad id="gGreen" stops={["#80e886", "#4bc84b"]} />
      <Grad id="gTunes" stops={["#f2605c", "#b666dd", "#3aa9f5"]} />
      <Grad id="gNote" stops={["#ee4f5c", "#b45ac8", "#3f8df5"]} />
      <Grad id="gStore" stops={["#3fb0f6", "#2460e8"]} />
      <Grad id="gHub" stops={["#a652a8", "#45237a"]} />
      <Grad id="gPost" stops={["#f4a060", "#ee5a36"]} />
      <Grad id="gBars" stops={["#5bd2d8", "#3a8ae2", "#2b35d8"]} />
      <Grad id="gTrash" stops={["#54585b", "#7e8285", "#4a4e51"]} />
    </defs>
  </svg>
);

const apps = [
  ["finder", 1], ["launchpad"], ["safari"], ["contacts"], ["calendar", 1], ["notes", 1], ["reminders", 1],
  ["maps"], ["photos"], ["messages"], ["facetime", 0, "4"], ["pages"], ["keynote"], ["itunes", 1],
  ["appstore", 0, "6"], ["settings", 0, "1"], ["chrome", 1], ["skype", 1, "1"], ["line", 1], ["turtle", 1],
  ["sublime", 1], ["slack", 1, "•"], ["github", 1],
];
const recents = [["conda", 1], ["excel", 1], ["postman", 1], ["bars", 1], ["terminal", 1]];
const stacks = [["doc"], ["trash"]];

const DockIcon = ({ item: [name, running, badge] }) => (
  <Cell>
    <svg width="78" height="82" viewBox="0 0 78 82">{art[name]}</svg>
    {running ? <RunDot /> : null}
    {badge && <Badge>{badge}</Badge>}
  </Cell>
);

const menus = [["File", 82], ["Edit", 87, -0.7], ["View", 100], ["History", 129, -0.6], ["Bookmarks", 181], ["People", 126, -0.7], ["Tab", 82, -0.8], ["Window", 141, -0.7], ["Help", 81, -0.8]];
const tabs = [
  { icon: <Jupyter />, title: "Documents/GitHub/DWH_proje", rule: 1 },
  { icon: <Jira />, title: "DATA SERVICE BOARD - Agile B", rule: 1 },
  { icon: <Robot />, title: "Ensemble Learning to Improve", rule: 1 },
  { icon: <Coursera />, title: "Architecting with Google Kuber" },
  { icon: <Coursera />, title: "Quiz: Updating deployments | C", active: true },
];
const questions = [
  {
    h: 504,
    lines: ["You want to have two versions of your application in production, but be able to switch all traffic between", "them. This is an example of which deployment strategy?"],
    options: ["Rolling updates", "Blue-green deployment", "Canary deployment"],
  },
  {
    h: 444,
    round: true,
    lines: ["You want to have two versions of your application in production, but be able to a small percentage of traffic", "to the newer version as a gradual test. This is an example of which deployment strategy?"],
    options: ["Canary deployment", "Rolling updates", "Blue-green deployment"],
  },
  { h: 200, lines: ['In a rolling update strategy, you can define the "max unavailable" parameter as a percentage. A percentage'], options: [] },
];
const downloads = ["index.mp4", "subtitle.txt", "index.mp4", "subtitle.txt", "index.mp4"];

export default function App() {
  return (
    <Desktop>
      <Global />
      <MenuBar>
        <MenuLeft>
          <AppleSlot><Apple /></AppleSlot>
          <MenuItem $w={146} $ls={0.1} $bold>Chrome</MenuItem>
          {menus.map(([m, w, ls]) => <MenuItem key={m} $w={w} $ls={ls}>{m}</MenuItem>)}
        </MenuLeft>
        <MenuRight>
          <Status $w={58}><LineBlob>LINE</LineBlob></Status>
          <Status $w={50}><SkypeOutline /></Status>
          <Status $w={63}><Bars /></Status>
          <Status $w={67}><Docker /></Status>
          <Status $w={48}><Bluetooth /></Status>
          <Status $w={68}><Wifi /></Status>
          <Status $w={70}><Battery /></Status>
          <Status $w={70}><InputBadge><InputTop>VI</InputTop><span>VNI</span></InputBadge></Status>
          <MenuItem $w={182}>Fri 2:39 AM</MenuItem>
          <MenuItem $w={162} $ls={-0.35}>Linh Trinh</MenuItem>
          <Status $w={64}><Search /></Status>
          <Status $w={56}><Siri /></Status>
          <Status $w={40}><ListIcon /></Status>
        </MenuRight>
      </MenuBar>

      <Window>
        <TabStrip>
          <Lights>
            <Light $c="#ec6559" />
            <Light $c="#e0bf4c" />
            <Light $c="#72bd47" />
          </Lights>
          {tabs.map((t) => (
            <Tab key={t.title} $active={t.active}>
              <Favicon>{t.icon}</Favicon>
              <TabTitle>{t.title}</TabTitle>
              <CloseSlot><X c={t.active ? "#f1f1f1" : undefined} /></CloseSlot>
              {t.rule && <TabRule />}
            </Tab>
          ))}
          <PlusSlot>
            <svg width="24" height="24" viewBox="0 0 24 24" stroke="#c5c7ca" strokeWidth="3.500"><path d="M12 0v24M0 12h24" /></svg>
          </PlusSlot>
        </TabStrip>
        <Toolbar>
          <NavButtons>
            <Arrow c="#f1f1f1" />
            <Arrow c="#85878b" flip />
            <Reload />
          </NavButtons>
          <Omnibox>
            <Lock />
            <Url><Host>coursera.org</Host>/learn/deploying-workloads-google-kubernetes-engine-gke/quiz/NDH8T/quiz-updating-deployments/attempt</Url>
            <Star />
          </Omnibox>
          <Extensions>
            <Translate />
            <Grammarly><GrammarlyIcon /></Grammarly>
            <ExtRule />
            <Avatar>Y</Avatar>
            <svg width="8" height="28" viewBox="0 0 8 28" fill="#f1f1f1"><circle cx="4" cy="4" r="3" /><circle cx="4" cy="14" r="3" /><circle cx="4" cy="24" r="3" /></svg>
          </Extensions>
        </Toolbar>

        <Page>
          <PageHeader>
            <BackSlot><BackArrow /></BackSlot>
            <HeaderText>
              <HeaderTitle>Quiz: Updating deployments</HeaderTitle>
              <HeaderSub>Practice Quiz • 30 min</HeaderSub>
            </HeaderText>
          </PageHeader>
          <Content>
            <H1>Quiz: Updating deployments</H1>
            <Total>TOTAL POINTS 3</Total>
            {questions.map((q, i) => (
              <Question key={i} $h={q.h}>
                <Num>{i + 1}.</Num>
                <QBody>
                  <Prompt>{q.lines[0]}<br />{q.lines[1]}</Prompt>
                  <Options $round={q.round}>
                    {q.options.map((o) => (
                      <Option key={o} $round={q.round}>
                        <BoxSlot><Box $round={q.round} /></BoxSlot>
                        <OptionText>{o}</OptionText>
                      </Option>
                    ))}
                  </Options>
                </QBody>
                <Points>1 point</Points>
              </Question>
            ))}
          </Content>
        </Page>

        <Shelf>
          {downloads.map((d, i) => (
            <Download key={i} $w={i ? 454 : 461} $pad={i ? 38 : 45}>
              <FileIcon>{d.endsWith("mp4") ? <MovieFile /> : <TextFile />}</FileIcon>
              <FileName>{d}</FileName>
              <Chevron><Up /></Chevron>
              <ShelfRule />
            </Download>
          ))}
          <ShelfEnd>
            <ShowAll>Show All</ShowAll>
            <ShelfClose><X w={2.800} /></ShelfClose>
          </ShelfEnd>
        </Shelf>
      </Window>

      <DockArea>
        <Dock>
          <Gradients />
          {apps.map((a) => <DockIcon key={a[0]} item={a} />)}
          <DockRule $h={48} $m="22px 15px 0 19px" />
          {recents.map((a) => <DockIcon key={a[0]} item={a} />)}
          <DockRule $h={72} $m="10px 16px 0 19px" />
          {stacks.map((a) => <DockIcon key={a[0]} item={a} />)}
        </Dock>
        <Behind>
          <BehindTop />
          <BehindBar>
            <SliderTrack />
            <SliderKnob />
          </BehindBar>
        </Behind>
      </DockArea>
    </Desktop>
  );
}
